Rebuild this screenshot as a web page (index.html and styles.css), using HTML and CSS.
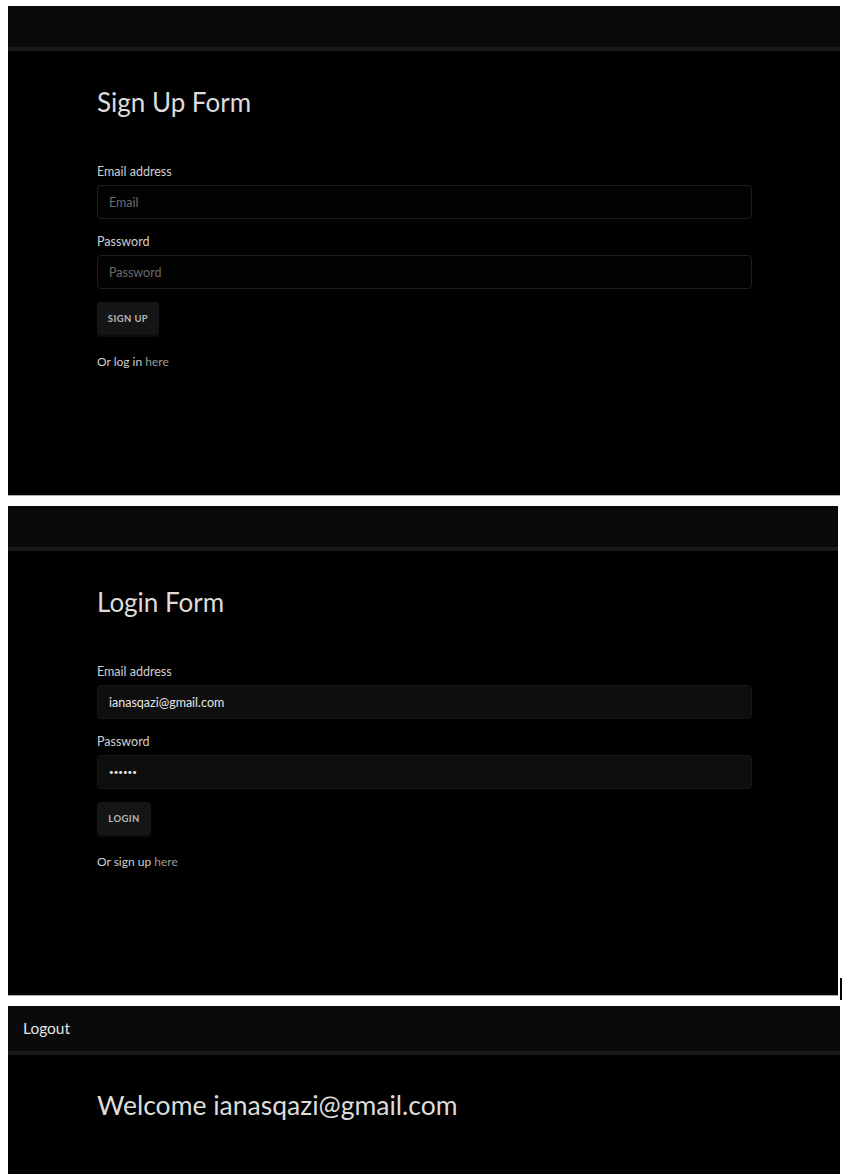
FILE: index.html
```html
<!DOCTYPE html>
<html lang="en">
<head>
<meta charset="utf-8">
<title>Auth screens</title>
<link rel="stylesheet" href="styles.css">
</head>
<body>
<div class="stack">
  <section class="panel panel-first">
    <header class="topbar"></header>
    <main class="content">
      <h1 class="title">Sign Up Form</h1>
      <form class="form">
        <label class="label">Email address</label>
        <div class="input input-empty">Email</div>
        <label class="label">Password</label>
        <div class="input input-empty">Password</div>
        <div class="btn btn-signup">SIGN UP</div>
        <p class="alt">Or log in <span class="link">here</span></p>
      </form>
    </main>
  </section>

  <section class="panel panel-second">
    <header class="topbar"></header>
    <main class="content">
      <h1 class="title">Login Form</h1>
      <form class="form">
        <label class="label">Email address</label>
        <div class="input input-filled">ianasqazi@gmail.com</div>
        <label class="label">Password</label>
        <div class="input input-filled dots">••••••</div>
        <div class="btn btn-login">LOGIN</div>
        <p class="alt">Or sign up <span class="link">here</span></p>
      </form>
    </main>
    <span class="caret"></span>
  </section>

  <section class="panel panel-third">
    <header class="topbar topbar-nav"><span class="nav-link">Logout</span></header>
    <main class="content">
      <h1 class="title title-welcome">Welcome ianasqazi@gmail.com</h1>
    </main>
  </section>
</div>
</body>
</html>
```

FILE: styles.css
```css
html, body {
  margin: 0;
  padding: 0;
  background: #ffffff;
}

body {
  font-family: "Lato", "Liberation Sans", sans-serif;
  color: #d6d6d6;
}

.stack {
  display: flex;
  flex-direction: column;
  padding: 6px 0 0 8px;
  width: 832px;
  gap: 10px;
}

.panel {
  background: #000000;
  display: flex;
  flex-direction: column;
  position: relative;
  box-sizing: border-box;
}

.panel-first {
  width: 832px;
  height: 490px;
  border-bottom: 1px solid #a8a8a8;
}

.panel-second {
  width: 830px;
  height: 490px;
  border-bottom: 1px solid #a8a8a8;
}

.panel-third {
  width: 832px;
  height: 170px;
}

.topbar {
  height: 41px;
  background: #0a0a0a;
  border-bottom: 4px solid #1b1b1b;
  flex: none;
}

.topbar-nav {
  height: 45px;
  display: flex;
  align-items: center;
  padding-left: 15px;
}

.nav-link {
  font-size: 15.5px;
  color: #e4e4e4;
  margin-top: -2px;
}

.content {
  padding-left: 89px;
  width: 655px;
}

.title {
  margin: 36px 0 0 0;
  font-weight: 400;
  font-size: 26px;
  line-height: 31px;
  color: #dcdcdc;
}

.title-welcome {
  margin-top: 35px;
  font-size: 26.5px;
}

.form {
  display: flex;
  flex-direction: column;
  margin-top: 45px;
}

.label {
  font-size: 12.5px;
  line-height: 18px;
  color: #cfcfcf;
}

.input {
  box-sizing: border-box;
  height: 34px;
  margin-top: 4px;
  margin-bottom: 14px;
  border-radius: 4px;
  padding: 0 11px;
  display: flex;
  align-items: center;
  font-size: 12.5px;
}

.input-empty {
  background: #020202;
  border: 1px solid #1f1f1f;
  color: #6a6a6a;
}

.input-filled {
  background: #0e0e0e;
  border: 1px solid #171717;
  color: #e6e6e6;
}

.dots {
  font-size: 8px;
  letter-spacing: 0;
}

.btn {
  align-self: flex-start;
  box-sizing: border-box;
  height: 33px;
  margin-top: -1px;
  display: flex;
  align-items: center;
  justify-content: center;
  background: #151515;
  border-radius: 4px;
  box-shadow: 0 2px 0 #0c0c0c;
  font-size: 9.5px;
  font-weight: 700;
  letter-spacing: 0.4px;
  color: #b8b8b8;
}

.btn-signup {
  width: 62px;
}

.btn-login {
  width: 54px;
}

.alt {
  margin: 18px 0 0 0;
  font-size: 12px;
  line-height: 18px;
  color: #cfcfcf;
}

.link {
  color: #9c9c9c;
}

.caret {
  position: absolute;
  right: -4px;
  bottom: -5px;
  width: 2px;
  height: 22px;
  background: #000000;
}
```
